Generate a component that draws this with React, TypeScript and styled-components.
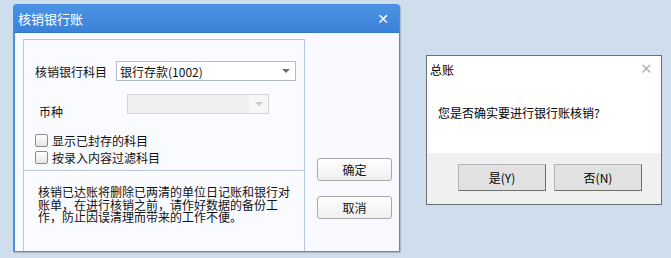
import styled, { createGlobalStyle } from "styled-components";

const Global = createGlobalStyle`
    html, body {
        margin: 0;
        padding: 0;
    }
    body {
        background: #cfdeec;
        font-family: "Noto Sans CJK SC", "Liberation Sans", sans-serif;
    }
`;

const Page = styled.div`
    width: 671px;
    height: 258px;
    display: flex;
    align-items: flex-start;
    padding: 4px 0 0 13px;
    box-sizing: border-box;
    background: #cfdeec;
    overflow: hidden;
`;

/* ---------- left dialog ---------- */

const Dialog = styled.div`
    width: 387px;
    height: 248px;
    box-sizing: border-box;
    display: flex;
    flex-direction: column;
    border: 1px solid #4c8de0;
    border-radius: 3px 3px 0 0;
    background: #f9faff;
    box-shadow: 1px 1px 1px rgba(90, 100, 120, 0.35);
`;

const TitleBar = styled.div`
    height: 27px;
    flex: none;
    display: flex;
    align-items: center;
    justify-content: space-between;
    padding: 0 10px 0 4px;
    background: linear-gradient(#4b93e4, #3b82d9);
    color: #fff;
    font-size: 13px;
    border-bottom: 1px solid #3476cc;
`;

const CloseX = styled.span`
    font-family: "DejaVu Sans", sans-serif;
    font-size: 14px;
    font-weight: bold;
    line-height: 1;
`;

const Body = styled.div`
    flex: 1;
    display: flex;
    padding: 6px 0 0 8px;
    border-left: 1px solid #4c8de0;
`;

const Panel = styled.div`
    width: 282px;
    box-sizing: border-box;
    display: flex;
    flex-direction: column;
    border: 1px solid #b6c6dc;
    border-bottom: none;
    background: #fafbff;
`;

const Upper = styled.div`
    height: 131px;
    box-sizing: border-box;
    border-bottom: 1px solid #b6c6dc;
    padding: 21px 0 0 11px;
    display: flex;
    flex-direction: column;
`;

const Row = styled.div<{ $top?: number }>`
    display: flex;
    align-items: center;
    margin-top: ${(p) => p.$top ?? 0}px;
    font-size: 12px;
    color: #111;
`;

const Label = styled.span<{ $indent?: number; $drop?: number }>`
    margin-left: ${(p) => p.$indent ?? 0}px;
    position: relative;
    top: ${(p) => p.$drop ?? 0}px;
    white-space: nowrap;
`;

const Combo = styled.div<{ $width: number; $disabled?: boolean; $gap: number }>`
    width: ${(p) => p.$width}px;
    height: 20px;
    box-sizing: border-box;
    margin-left: ${(p) => p.$gap}px;
    display: flex;
    align-items: center;
    border: 1px solid ${(p) => (p.$disabled ? "#d2d6dc" : "#b4bcc8")};
    background: ${(p) => (p.$disabled ? "#f0f0f0" : "#fff")};
    font-size: 12px;
    color: #111;
`;

const ComboText = styled.span`
    flex: 1;
    padding-left: 3px;
    white-space: nowrap;
`;

const ArrowBox = styled.span<{ $disabled?: boolean }>`
    width: 19px;
    height: 100%;
    display: flex;
    align-items: center;
    justify-content: center;
    background: ${(p) => (p.$disabled ? "#f7f7f7" : "transparent")};

    &::after {
        content: "";
        border-left: 4px solid transparent;
        border-right: 4px solid transparent;
        border-top: 4px solid ${(p) => (p.$disabled ? "#c8c8c8" : "#6c6c6c")};
    }
`;

const Check = styled.label<{ $top: number }>`
    display: flex;
    align-items: center;
    gap: 4px;
    margin-top: ${(p) => p.$top}px;
    font-size: 12px;
    color: #111;
    height: 14px;
`;

const Box = styled.span`
    width: 13px;
    height: 13px;
    box-sizing: border-box;
    border: 1px solid #8c8c8c;
    border-radius: 2px;
    background: linear-gradient(#ffffff, #e6e6e6);
    flex: none;
`;

const Note = styled.div`
    padding: 15px 0 0 14px;
    width: 258px;
    font-size: 12px;
    line-height: 12.5px;
    color: #111;
`;

const Side = styled.div`
    flex: 1;
    display: flex;
    flex-direction: column;
    align-items: center;
    padding-top: 119px;
    padding-left: 5px;
    gap: 15px;
`;

const Btn = styled.button`
    width: 75px;
    height: 23px;
    border: 1px solid #a8a8a8;
    border-radius: 3px;
    background: linear-gradient(#ffffff, #efefef);
    font-family: "Noto Sans CJK SC", sans-serif;
    font-size: 12px;
    color: #111;
    padding: 0;
`;

/* ---------- right message box ---------- */

const MsgBox = styled.div`
    margin: 51px 0 0 26px;
    width: 236px;
    height: 150px;
    box-sizing: border-box;
    border: 1px solid #6c6f74;
    background: #fff;
    display: flex;
    flex-direction: column;
`;

const MsgTitle = styled.div`
    height: 26px;
    display: flex;
    align-items: center;
    justify-content: space-between;
    padding: 0 8px 0 3px;
    font-size: 12px;
    color: #000;
`;

const LightX = styled.span`
    font-family: "DejaVu Sans", sans-serif;
    font-size: 15px;
    font-weight: 200;
    color: #b5b5b5;
`;

const MsgText = styled.div`
    flex: 1;
    padding: 22px 0 0 11px;
    font-size: 12px;
    color: #000;
`;

const MsgFooter = styled.div`
    height: 51px;
    box-sizing: border-box;
    background: #f0f0f0;
    display: flex;
    justify-content: flex-end;
    gap: 8px;
    padding: 11px 19px 0 0;
`;

const WinBtn = styled.button`
    width: 88px;
    height: 27px;
    box-sizing: border-box;
    border: 1px solid #b5b5b5;
    border-right-color: #6f6f6f;
    border-bottom-color: #6f6f6f;
    background: #e1e1e1;
    font-family: "Noto Sans CJK SC", sans-serif;
    font-size: 12px;
    color: #000;
    padding: 0;
`;

export default function App() {
    return (
        <>
            <Global />
            <Page>
                <Dialog>
                    <TitleBar>
                        <span>核销银行账</span>
                        <CloseX>✕</CloseX>
                    </TitleBar>
                    <Body>
                        <Panel>
                            <Upper>
                                <Row>
                                    <Label>核销银行科目</Label>
                                    <Combo $width={180} $gap={9}>
                                        <ComboText>银行存款(1002)</ComboText>
                                        <ArrowBox />
                                    </Combo>
                                </Row>
                                <Row $top={13}>
                                    <Label $indent={4} $drop={7}>币种</Label>
                                    <Combo $width={142} $gap={64} $disabled>
                                        <ComboText />
                                        <ArrowBox $disabled />
                                    </Combo>
                                </Row>
                                <Check $top={19}>
                                    <Box />
                                    <span>显示已封存的科目</span>
                                </Check>
                                <Check $top={3}>
                                    <Box />
                                    <span>按录入内容过滤科目</span>
                                </Check>
                            </Upper>
                            <Note>
                                核销已达账将删除已两清的单位日记账和银行对账单，在进行核销之前，请作好数据的备份工作，防止因误清理而带来的工作不便。
                            </Note>
                        </Panel>
                        <Side>
                            <Btn>确定</Btn>
                            <Btn>取消</Btn>
                        </Side>
                    </Body>
                </Dialog>
                <MsgBox>
                    <MsgTitle>
                        <span>总账</span>
                        <LightX>✕</LightX>
                    </MsgTitle>
                    <MsgText>您是否确实要进行银行账核销?</MsgText>
                    <MsgFooter>
                        <WinBtn>是(Y)</WinBtn>
                        <WinBtn>否(N)</WinBtn>
                    </MsgFooter>
                </MsgBox>
            </Page>
        </>
    );
}
